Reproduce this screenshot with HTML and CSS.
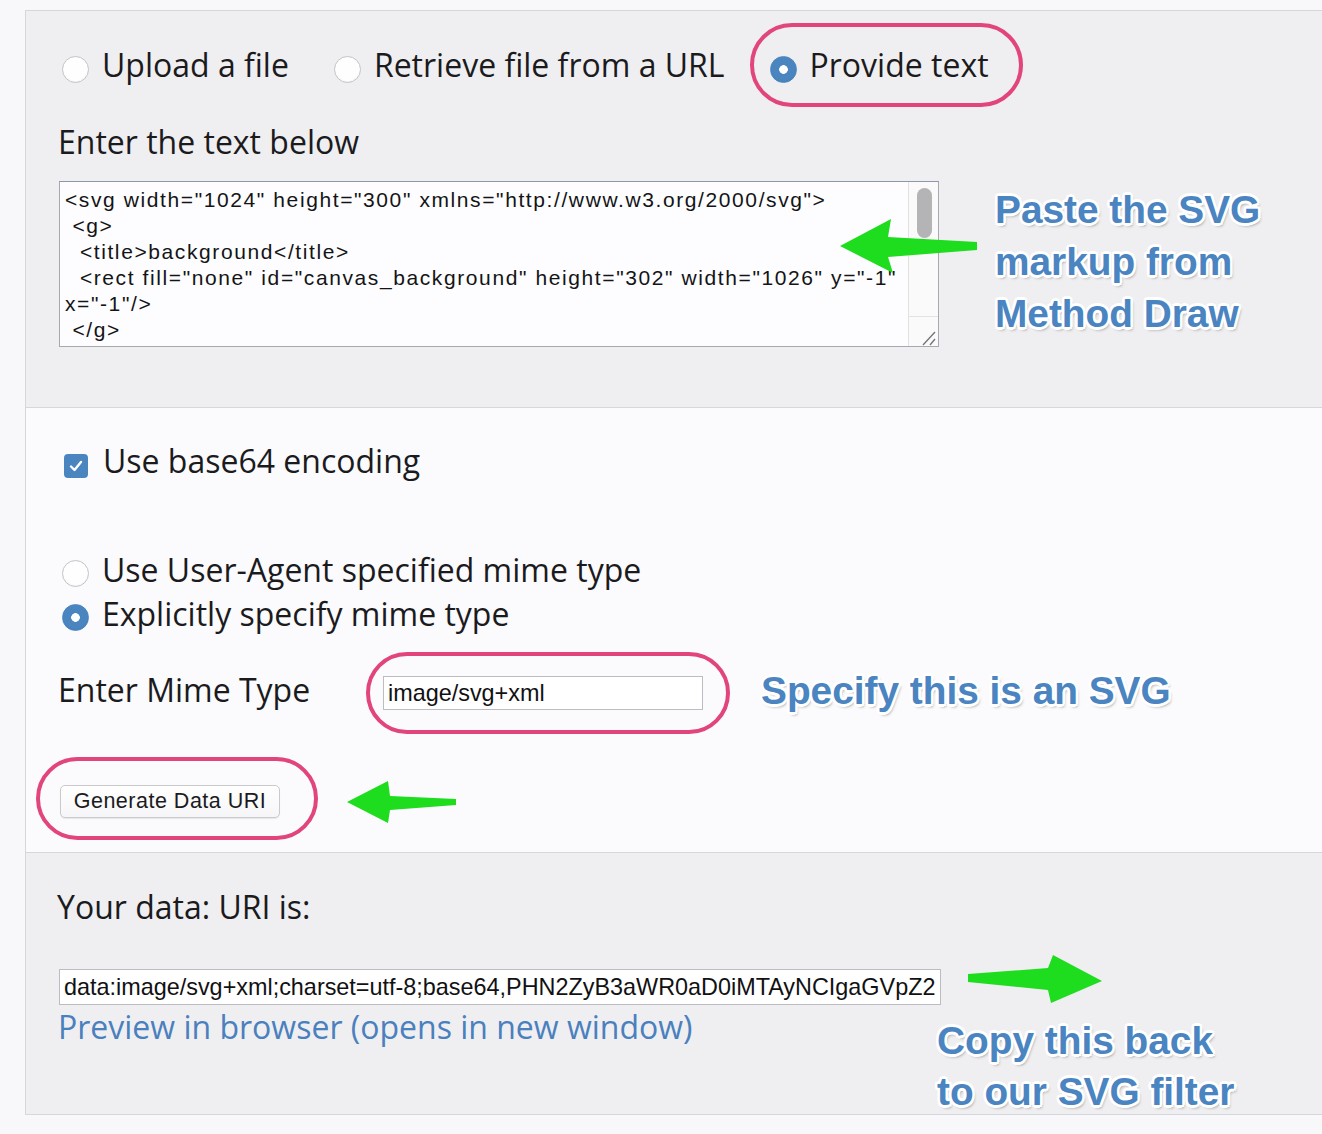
FILE: index.html
```html
<!DOCTYPE html>
<html lang="en">
<head>
<meta charset="utf-8">
<title>Data URI generator</title>
<link rel="stylesheet" href="styles.css">
</head>
<body>
<div class="page">
  <div class="panel">
    <section class="sec sec-gray sec-source">
      <div class="radio-row">
        <label class="opt"><input type="radio" name="src" class="radio"><span>Upload a file</span></label>
        <label class="opt"><input type="radio" name="src" class="radio"><span>Retrieve file from a URL</span></label>
        <label class="opt"><input type="radio" name="src" class="radio" checked><span>Provide text</span></label>
      </div>
      <div class="heading heading-text">Enter the text below</div>
      <div class="code-box">
        <textarea class="code" spellcheck="false">&lt;svg width="1024" height="300" xmlns="http://www.w3.org/2000/svg"&gt;
 &lt;g&gt;
  &lt;title&gt;background&lt;/title&gt;
  &lt;rect fill="none" id="canvas_background" height="302" width="1026" y="-1" x="-1"/&gt;
 &lt;/g&gt;
 &lt;g&gt;
  &lt;title&gt;Layer 1&lt;/title&gt;
  &lt;text xml:space="preserve" text-anchor="start" font-family="Helvetica, Arial, sans-serif" font-size="24" id="svg_1" y="150" x="512" stroke-width="0" stroke="#000" fill="#000000"&gt;Text&lt;/text&gt;
 &lt;/g&gt;
&lt;/svg&gt;</textarea>
        <div class="vscroll" aria-hidden="true">
          <div class="vtrack"><div class="vthumb"></div></div>
          <div class="vcorner">
            <svg width="29" height="29" viewBox="0 0 29 29"><path d="M14 28 L26 15 M21 28 L26 22" stroke="#77777a" stroke-width="1.4" fill="none"/></svg>
          </div>
        </div>
      </div>
    </section>

    <section class="sec sec-white sec-options">
      <label class="opt check-row">
        <input type="checkbox" class="hidden-input" checked>
        <span class="checkbox"><svg viewBox="0 0 24 24" width="24" height="24"><path d="M7 12.5 L10.5 16 L17 8" fill="none" stroke="#fff" stroke-width="2.4" stroke-linecap="round" stroke-linejoin="round"/></svg></span>
        <span>Use base64 encoding</span>
      </label>
      <div class="mime-opts">
        <label class="opt opt-tall"><input type="radio" name="mime" class="radio"><span>Use User-Agent specified mime type</span></label>
        <label class="opt opt-tall"><input type="radio" name="mime" class="radio" checked><span>Explicitly specify mime type</span></label>
      </div>
      <div class="mime-row">
        <span class="heading mime-label">Enter Mime Type</span>
        <input class="field mime" type="text" value="image/svg+xml">
      </div>
      <button class="btn" type="button">Generate Data URI</button>
    </section>

    <section class="sec sec-gray sec-result">
      <div class="heading heading-uri">Your data: URI is:</div>
      <input class="field uri" type="text" value="data:image/svg+xml;charset=utf-8;base64,PHN2ZyB3aWR0aD0iMTAyNCIgaGVpZ2h0PSIzMDAiIHhtbG5zPSJodHRwOi8vd3d3LnczLm9yZy8yMDAwL3N2ZyI+">
      <a class="preview" href="#">Preview in browser (opens in new window)</a>
    </section>
  </div>

  <div class="ring ring-provide"></div>
  <div class="ring ring-mime"></div>
  <div class="ring ring-btn"></div>

  <svg class="arrows" width="1322" height="1134" viewBox="0 0 1322 1134">
    <path d="M840 246 L891 219 L888 237 L977 242 L977 250 L888 257 L893 273 Z" fill="#1edc1e"/>
    <path d="M347 802 L388 781 L390 796 L456 799 L456 805 L390 810 L388 823 Z" fill="#1edc1e"/>
    <path d="M968 974 L1048 968 L1053 955 L1102 981 L1051 1003 L1048 990 L968 982 Z" fill="#1edc1e"/>
  </svg>

  <div class="note note-paste">Paste the SVG<br>markup from<br>Method Draw</div>
  <div class="note note-mime">Specify this is an SVG</div>
  <div class="note note-copy">Copy this back<br>to our SVG filter</div>
</div>
</body>
</html>
```

FILE: styles.css
```css
html, body {
  margin: 0;
  padding: 0;
}

body {
  background: #f8f8fa;
  font-family: "Open Sans", "Noto Sans", sans-serif;
  color: #1b1b1e;
  overflow: hidden;
}

.page {
  position: relative;
  width: 1322px;
  height: 1134px;
  overflow: hidden;
}

.panel {
  margin: 10px 0 0 25px;
  width: 1400px;
  border: 1px solid #d6d7dc;
  border-right: none;
}

.sec {
  padding-left: 33px;
}

.sec-gray {
  background: #efeff1;
}

.sec-white {
  background: #fbfbfd;
  border-top: 1px solid #d6d7dc;
  border-bottom: 1px solid #d6d7dc;
}

.sec-source {
  padding-top: 34px;
  padding-bottom: 60px;
}

.sec-options {
  padding-top: 33px;
  padding-bottom: 34px;
}

.sec-result {
  padding-top: 34px;
  padding-bottom: 67px;
}

/* options */
.radio-row {
  display: flex;
  gap: 42px;
  height: 40px;
}

.opt {
  display: flex;
  align-items: flex-start;
  gap: 13px;
  font-size: 32px;
  line-height: 40px;
  height: 40px;
  white-space: nowrap;
}

.opt-tall {
  line-height: 44px;
  height: 44px;
}

.radio {
  appearance: none;
  -webkit-appearance: none;
  width: 27px;
  height: 27px;
  margin: 11px 0 0 3px;
  border-radius: 50%;
  border: 1px solid #c3c3c8;
  background: #fefeff;
  box-shadow: inset 0 -1px 1px rgba(0, 0, 0, 0.04);
  box-sizing: border-box;
  flex-shrink: 0;
}

.opt-tall .radio {
  margin-top: 12px;
}

.radio:checked {
  border-color: #4a85c0;
  background: radial-gradient(circle, #ffffff 0 4px, #4a85c0 4.6px);
}

.hidden-input {
  position: absolute;
  opacity: 0;
  width: 0;
  height: 0;
  margin: 0;
}

.check-row {
  gap: 15px;
}

.checkbox {
  display: block;
  width: 24px;
  height: 24px;
  margin: 13px 0 0 5px;
  border-radius: 4px;
  background: #4a85c0;
  flex-shrink: 0;
}

.checkbox svg {
  display: block;
}

.mime-opts {
  margin-top: 67px;
}

.heading {
  font-size: 32px;
  line-height: 40px;
  height: 40px;
  margin-left: -1px;
}

.heading-uri {
  margin-left: -2px;
}

.heading-text {
  margin-top: 37px;
}

/* textarea with its scrollbar */
.code-box {
  display: flex;
  margin-top: 19px;
  width: 880px;
  height: 166px;
  box-sizing: border-box;
  border: 1px solid #a7a8b0;
  border-top-color: #8c97ad;
  background: #fdfdff;
}

.code {
  flex: 1;
  min-width: 0;
  height: 100%;
  box-sizing: border-box;
  margin: 0;
  padding: 5px 4px 0 5px;
  border: none;
  background: transparent;
  font-family: "Liberation Sans", Arial, sans-serif;
  font-size: 21px;
  letter-spacing: 1.6px;
  line-height: 26px;
  color: #141416;
  resize: none;
  overflow: hidden;
  outline: none;
}

.vscroll {
  width: 30px;
  flex-shrink: 0;
  display: flex;
  flex-direction: column;
  box-sizing: border-box;
  border-left: 1px solid #e2e2e4;
  background: #fafafa;
}

.vtrack {
  flex: 1;
  padding: 6px 6px 0 8px;
}

.vthumb {
  height: 50px;
  border-radius: 8px;
  background: #b4b4b7;
}

.vcorner {
  height: 30px;
  box-sizing: border-box;
  border-top: 1px solid #e2e2e4;
}

.vcorner svg {
  display: block;
}

/* mime row */
.mime-row {
  display: flex;
  align-items: flex-start;
  margin-top: 34px;
  height: 40px;
}

.mime-label {
  width: 325px;
  flex-shrink: 0;
}

.field {
  box-sizing: border-box;
  border: 1px solid #bcbcc2;
  background: #ffffff;
  font-family: "Liberation Sans", Arial, sans-serif;
  font-size: 23.4px;
  color: #111113;
  padding: 0 4px;
  margin: 0;
  outline: none;
}

.mime {
  width: 320px;
  height: 34px;
  margin-top: 6px;
}

.btn {
  display: block;
  margin: 75px 0 0 1px;
  width: 220px;
  height: 33px;
  border: 1px solid #cacacd;
  border-radius: 5px;
  background: linear-gradient(#ffffff, #f6f6f8);
  box-shadow: 0 1px 1px rgba(0, 0, 0, 0.08);
  font-family: "Liberation Sans", Arial, sans-serif;
  font-size: 21.5px;
  letter-spacing: 0.5px;
  color: #1b1b1e;
  padding: 0;
}

/* result */
.uri {
  display: block;
  margin-top: 42px;
  width: 882px;
  height: 36px;
}

.preview {
  display: block;
  margin: 2px 0 0 -1px;
  font-size: 32px;
  line-height: 40px;
  height: 40px;
  color: #4a80be;
  text-decoration: none;
}

/* annotations */
.ring {
  position: absolute;
  box-sizing: border-box;
  border: 4px solid #e1457b;
  border-radius: 42px;
}

.ring-provide {
  left: 750px;
  top: 23px;
  width: 273px;
  height: 84px;
}

.ring-mime {
  left: 366px;
  top: 652px;
  width: 364px;
  height: 82px;
}

.ring-btn {
  left: 36px;
  top: 757px;
  width: 282px;
  height: 83px;
}

.arrows {
  position: absolute;
  left: 0;
  top: 0;
  pointer-events: none;
}

.note {
  position: absolute;
  font-family: "Liberation Sans", Arial, sans-serif;
  font-weight: bold;
  font-size: 38.8px;
  line-height: 52px;
  color: #4a84c1;
  white-space: nowrap;
  text-shadow:
    -2px -2px 0 #fff, 2px -2px 0 #fff, -2px 2px 0 #fff, 2px 2px 0 #fff,
    0 -2.6px 0 #fff, 0 2.6px 0 #fff, -2.6px 0 0 #fff, 2.6px 0 0 #fff,
    2px 3px 3px rgba(0, 0, 0, 0.35);
}

.note-paste {
  left: 995px;
  top: 184px;
}

.note-mime {
  left: 761px;
  top: 665px;
}

.note-copy {
  left: 937px;
  top: 1015px;
  line-height: 51px;
}
```
